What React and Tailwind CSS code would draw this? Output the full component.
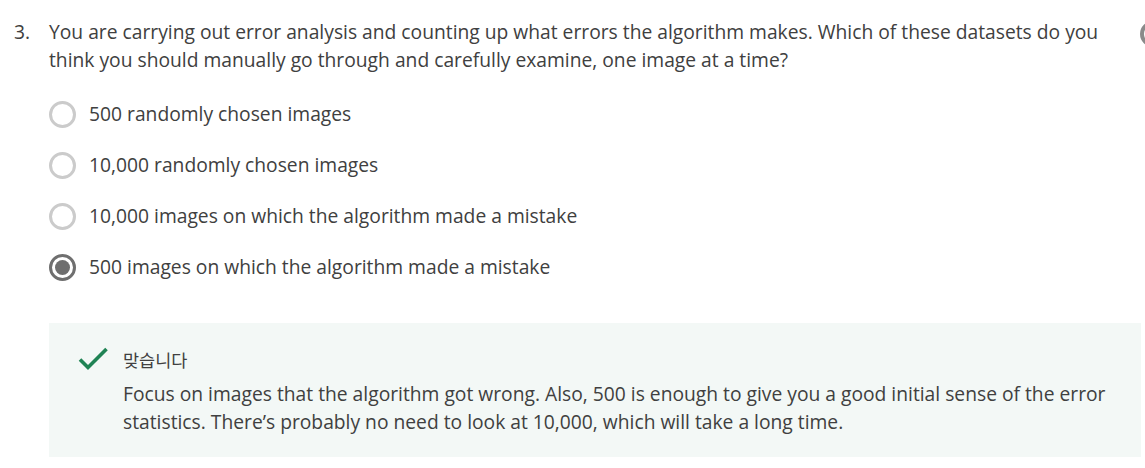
import React from "react";

const options = [
  { label: "500 randomly chosen images", checked: false },
  { label: "10,000 randomly chosen images", checked: false },
  { label: "10,000 images on which the algorithm made a mistake", checked: false },
  { label: "500 images on which the algorithm made a mistake", checked: true },
];

function Radio({ checked }) {
  return checked ? (
    <span className="flex h-[27px] w-[27px] shrink-0 items-center justify-center rounded-full border-[3px] border-[#6f6f6f]">
      <span className="h-[15px] w-[15px] rounded-full bg-[#6f6f6f]" />
    </span>
  ) : (
    <span className="h-[27px] w-[27px] shrink-0 rounded-full border-[3px] border-[#cbcbcb]" />
  );
}

export default function App() {
  return (
    <div
      className="relative h-[468px] w-[1145px] overflow-hidden bg-white text-[19.25px] leading-[28px] text-[#404040]"
      style={{ fontFamily: '"Open Sans", "Noto Sans CJK KR", sans-serif' }}
    >
      <div className="absolute left-[1140px] top-[21px] h-[26px] w-[26px] rounded-full border-[4px] border-[#8a8a8a]" />
      <div className="flex pl-[14px] pt-[18px]">
        <div className="w-[35px] shrink-0">3.</div>
        <div className="w-[1092px]">
          <p>
            You are carrying out error analysis and counting up what errors the algorithm makes. Which of these
            datasets do you think you should manually go through and carefully examine, one image at a time?
          </p>
          <div className="mt-[26px] flex flex-col gap-[23px]">
            {options.map((o) => (
              <div key={o.label} className="flex items-center gap-[13px]">
                <Radio checked={o.checked} />
                <span>{o.label}</span>
              </div>
            ))}
          </div>
          <div className="mt-[42px] flex h-[134px] bg-[#f3f8f6] pl-[29px] pt-[23px]">
            <svg width="31" height="24" viewBox="0 0 31 24" className="mt-[1px] shrink-0">
              <path d="M2 12.5 L10 20.5 L28.5 2" fill="none" stroke="#1f8354" strokeWidth="3.6" />
            </svg>
            <div className="ml-[14px]">
              <div className="text-[17.5px]">맞습니다</div>
              <p className="mt-[6px] w-[1000px]">
                Focus on images that the algorithm got wrong. Also, 500 is enough to give you a good initial sense of the
                error statistics. There’s probably no need to look at 10,000, which will take a long time.
              </p>
            </div>
          </div>
        </div>
      </div>
    </div>
  );
}
